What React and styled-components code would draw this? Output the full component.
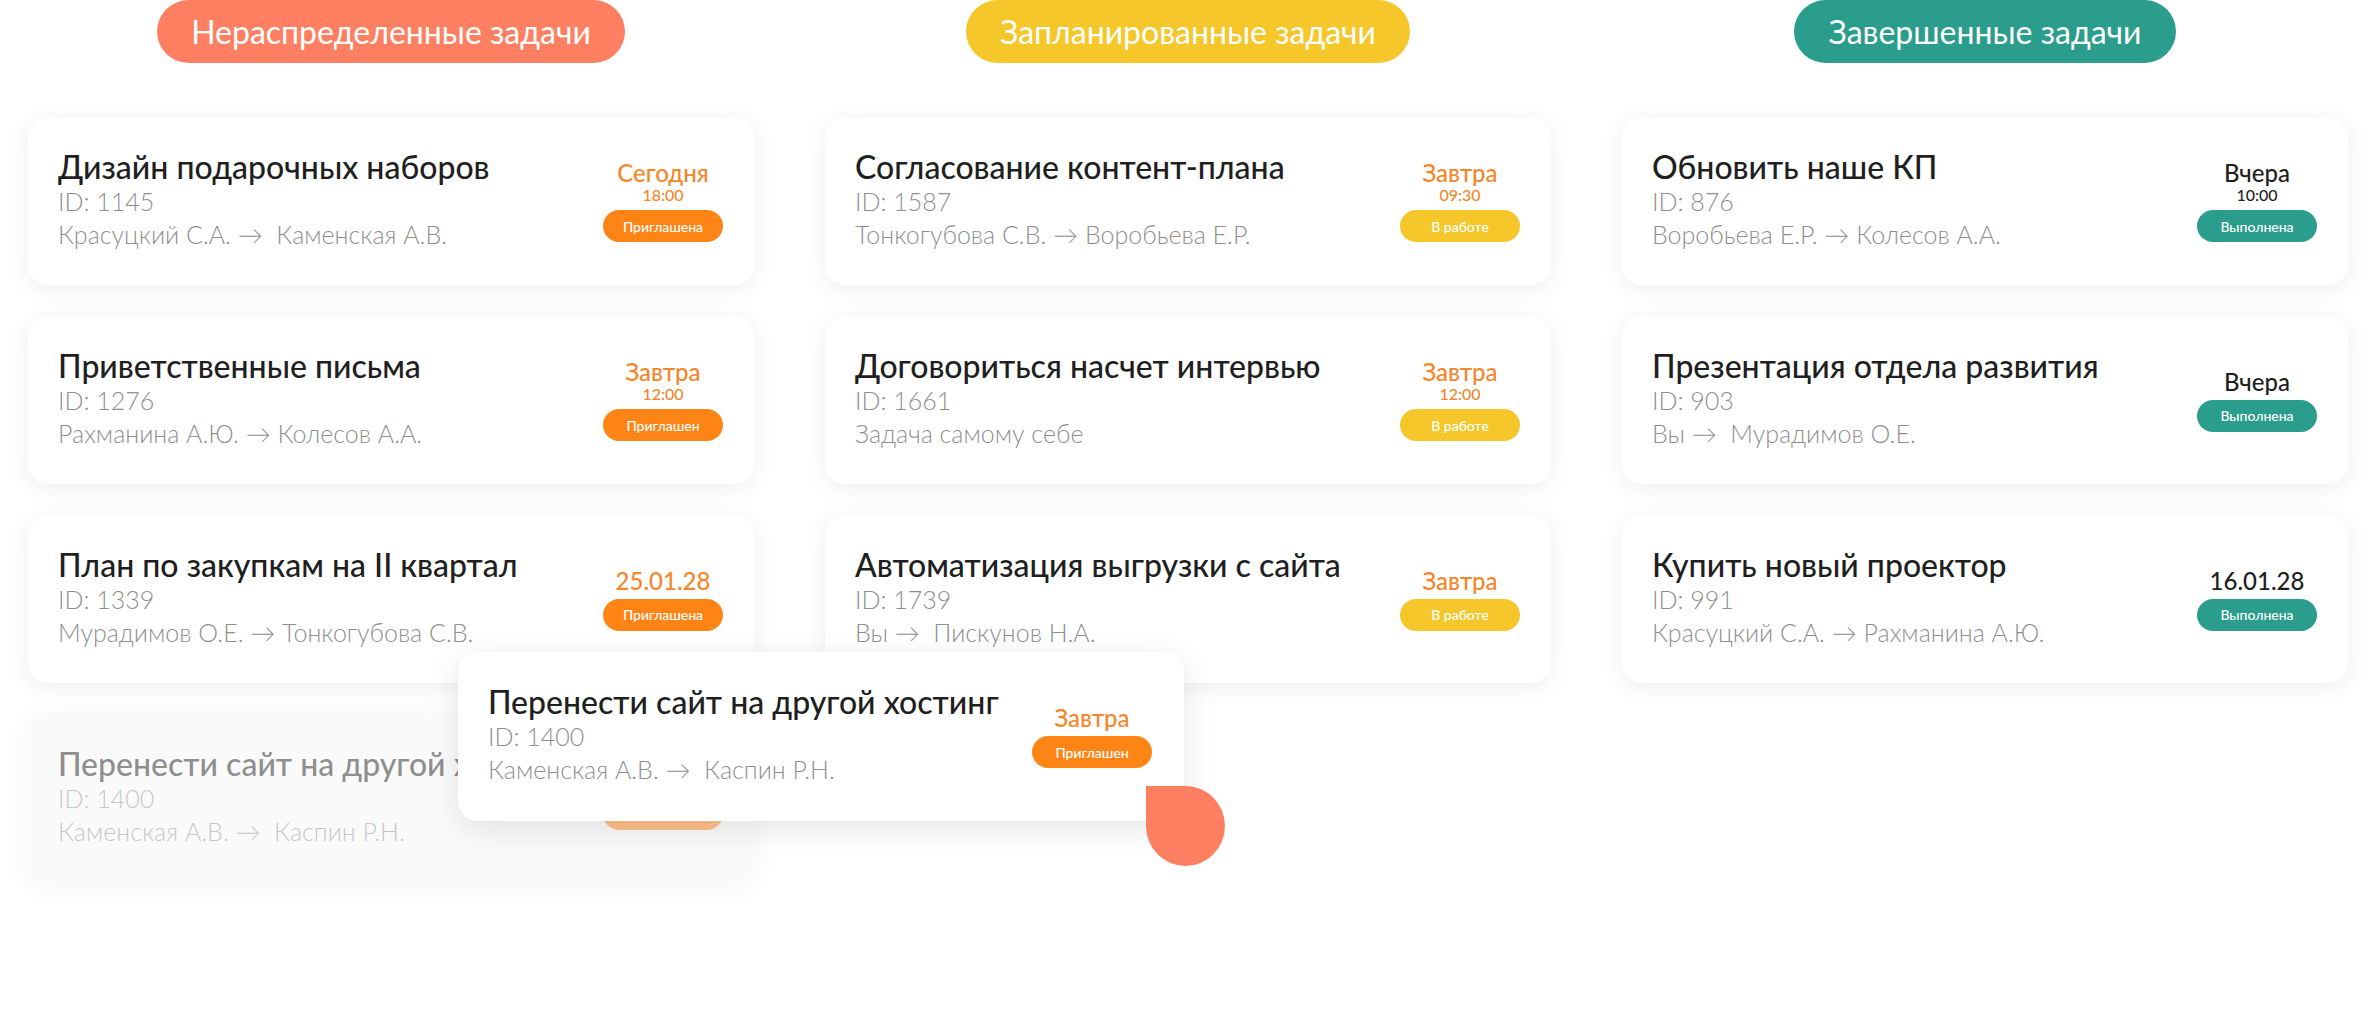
import styled, { createGlobalStyle } from "styled-components";

const GlobalStyle = createGlobalStyle`
  body {
    margin: 0;
    background: #ffffff;
    font-family: "Lato", "Noto Sans", sans-serif;
  }
`;

const tones = {
  coral: "#ff7f62",
  yellow: "#f5c72a",
  teal: "#2a9d8c",
  orange: "#ff8416",
};

const Board = styled.div`
  position: relative;
  display: grid;
  grid-template-columns: repeat(3, 726px);
  column-gap: 71px;
  padding-left: 28px;
  height: 1036px;
  overflow: hidden;
`;

const Column = styled.section`
  display: flex;
  flex-direction: column;
  align-items: center;
`;

const Header = styled.div`
  height: 63px;
  padding: 0 34px;
  display: flex;
  align-items: center;
  border-radius: 32px;
  background: ${(p) => tones[p.$tone]};
  color: #ffffff;
  font-size: 32px;
  font-weight: 400;
  margin-bottom: 54px;
`;

const CardList = styled.div`
  width: 100%;
  display: flex;
  flex-direction: column;
  gap: 31px;
`;

const Card = styled.div`
  box-sizing: border-box;
  width: 726px;
  height: 168px;
  display: flex;
  align-items: center;
  justify-content: space-between;
  padding: 0 31px 0 30px;
  background: ${(p) => (p.$ghost ? "#f7f7f7" : "#ffffff")};
  border-radius: 20px;
  box-shadow: 0 4px 22px rgba(0, 0, 0, 0.07);
  opacity: ${(p) => (p.$ghost ? 0.5 : 1)};
`;

const DraggedCard = styled(Card)`
  position: absolute;
  left: 458px;
  top: 652px;
  height: 169px;
  padding-right: 32px;
  box-shadow: 0 8px 32px rgba(0, 0, 0, 0.1);
  z-index: 2;
`;

const Info = styled.div`
  display: flex;
  flex-direction: column;
  padding-bottom: 4px;
`;

const Title = styled.div`
  font-size: 32px;
  line-height: 37px;
  font-weight: 500;
  color: #1f1f1f;
  white-space: nowrap;
`;

const Meta = styled.div`
  font-size: 25px;
  line-height: 33px;
  font-weight: 300;
  color: #8f8f8f;
  white-space: pre;
`;

const Side = styled.div`
  width: 120px;
  display: flex;
  flex-direction: column;
  align-items: center;
`;

const When = styled.div`
  font-size: 24px;
  line-height: 25px;
  font-weight: 500;
  color: ${(p) => (p.$dark ? "#1f1f1f" : "#f5862a")};
  visibility: ${(p) => (p.$hidden ? "hidden" : "visible")};
`;

const Time = styled.div`
  font-size: 16px;
  line-height: 19px;
  font-weight: 500;
  color: ${(p) => (p.$dark ? "#1f1f1f" : "#f5862a")};
`;

const Badge = styled.div`
  margin-top: 6px;
  width: 120px;
  height: 32px;
  border-radius: 16px;
  display: flex;
  align-items: center;
  justify-content: center;
  background: ${(p) => tones[p.$tone]};
  color: #ffffff;
  font-size: 14px;
  font-weight: 500;
`;

const Pointer = styled.div`
  position: absolute;
  left: 1146px;
  top: 786px;
  width: 79px;
  height: 80px;
  background: #ff7f62;
  border-radius: 0 50% 50% 50%;
  z-index: 3;
`;

const columns = [
  {
    title: "Нераспределенные задачи",
    tone: "coral",
    badge: "orange",
    dark: false,
    tasks: [
      { name: "Дизайн подарочных наборов", id: 1145, who: "Красуцкий С.А. →  Каменская А.В.", when: "Сегодня", time: "18:00", status: "Приглашена" },
      { name: "Приветственные письма", id: 1276, who: "Рахманина А.Ю. → Колесов А.А.", when: "Завтра", time: "12:00", status: "Приглашен" },
      { name: "План по закупкам на II квартал", id: 1339, who: "Мурадимов О.Е. → Тонкогубова С.В.", when: "25.01.28", status: "Приглашена" },
      { name: "Перенести сайт на другой хостинг", id: 1400, who: "Каменская А.В. →  Каспин Р.Н.", when: "Завтра", status: "Приглашен", ghost: true },
    ],
  },
  {
    title: "Запланированные задачи",
    tone: "yellow",
    badge: "yellow",
    dark: false,
    tasks: [
      { name: "Согласование контент-плана", id: 1587, who: "Тонкогубова С.В. → Воробьева Е.Р.", when: "Завтра", time: "09:30", status: "В работе" },
      { name: "Договориться насчет интервью", id: 1661, who: "Задача самому себе", when: "Завтра", time: "12:00", status: "В работе" },
      { name: "Автоматизация выгрузки с сайта", id: 1739, who: "Вы →  Пискунов Н.А.", when: "Завтра", status: "В работе" },
    ],
  },
  {
    title: "Завершенные задачи",
    tone: "teal",
    badge: "teal",
    dark: true,
    tasks: [
      { name: "Обновить наше КП", id: 876, who: "Воробьева Е.Р. → Колесов А.А.", when: "Вчера", time: "10:00", status: "Выполнена" },
      { name: "Презентация отдела развития", id: 903, who: "Вы →  Мурадимов О.Е.", when: "Вчера", status: "Выполнена" },
      { name: "Купить новый проектор", id: 991, who: "Красуцкий С.А. → Рахманина А.Ю.", when: "16.01.28", status: "Выполнена" },
    ],
  },
];

// ghost = the slot the dragged card left behind, mostly hidden under it
function TaskBody({ task, badge, dark, ghost }) {
  return (
    <>
      <Info>
        <Title>{task.name}</Title>
        <Meta>ID: {task.id}</Meta>
        <Meta>{task.who}</Meta>
      </Info>
      <Side>
        <When $dark={dark} $hidden={ghost}>{task.when}</When>
        {task.time && <Time $dark={dark}>{task.time}</Time>}
        <Badge $tone={badge}>{ghost ? "" : task.status}</Badge>
      </Side>
    </>
  );
}

export default function App() {
  const dragged = columns[0].tasks[3];
  return (
    <>
      <GlobalStyle />
      <Board>
        {columns.map((col) => (
          <Column key={col.title}>
            <Header $tone={col.tone}>{col.title}</Header>
            <CardList>
              {col.tasks.map((task) => (
                <Card key={task.id} $ghost={task.ghost}>
                  <TaskBody task={task} badge={col.badge} dark={col.dark} ghost={task.ghost} />
                </Card>
              ))}
            </CardList>
          </Column>
        ))}
        <DraggedCard>
          <TaskBody task={dragged} badge="orange" dark={false} />
        </DraggedCard>
        <Pointer />
      </Board>
    </>
  );
}
